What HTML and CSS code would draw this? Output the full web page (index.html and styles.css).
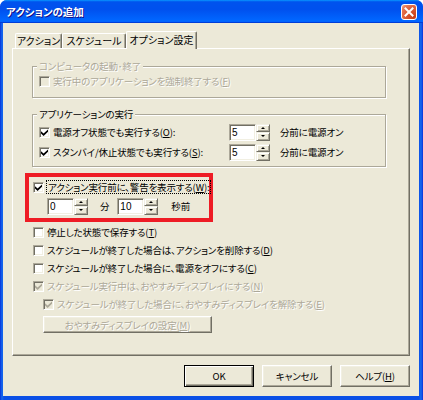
FILE: index.html
```html
<!DOCTYPE html>
<html lang="ja">
<head>
<meta charset="utf-8">
<title>アクションの追加</title>
<link rel="stylesheet" href="styles.css">
</head>
<body>
<div class="window">
  <div class="titlebar">
    <span class="title">アクションの追加</span>
    <span class="close"><svg width="10" height="10" viewBox="0 0 10 10"><path d="M1.5 1.5l7 7M8.5 1.5l-7 7" stroke="#fff" stroke-width="2" stroke-linecap="square"/></svg></span>
  </div>
  <div class="client">
    <div class="tabs">
      <div class="tab t1">アクション</div>
      <div class="tab t2">スケジュール</div>
      <div class="tab t3 active">オプション設定</div>
    </div>
    <div class="panel">
      <fieldset class="group g1 disabled">
        <legend>コンピュータの起動･終了</legend>
        <div class="row r16"><span class="cb"></span><span class="lbl">実行中のアプリケーションを強制終了する(<u>F</u>)</span></div>
      </fieldset>

      <fieldset class="group g2">
        <legend>アプリケーションの実行</legend>
        <div class="row spinrow">
          <div class="check wide"><span class="cb"><svg viewBox="0 0 7 7" width="7" height="7"><path d="M0 2.2 L2.6 4.6 L7 0.4 V2.8 L2.6 7 L0 4.6 Z"/></svg></span><span class="lbl">電源オフ状態でも実行する(<u>O</u>):</span></div>
          <div class="spin"><span class="edit">5</span><span class="arrows"><span class="up"></span><span class="dn"></span></span></div>
          <span class="after">分前に電源オン</span>
        </div>
        <div class="row spinrow">
          <div class="check wide"><span class="cb"><svg viewBox="0 0 7 7" width="7" height="7"><path d="M0 2.2 L2.6 4.6 L7 0.4 V2.8 L2.6 7 L0 4.6 Z"/></svg></span><span class="lbl">スタンバイ/休止状態でも実行する(<u>S</u>):</span></div>
          <div class="spin"><span class="edit">5</span><span class="arrows"><span class="up"></span><span class="dn"></span></span></div>
          <span class="after">分前に電源オン</span>
        </div>
      </fieldset>

      <div class="highlight">
        <div class="row r18"><span class="cb"><svg viewBox="0 0 7 7" width="7" height="7"><path d="M0 2.2 L2.6 4.6 L7 0.4 V2.8 L2.6 7 L0 4.6 Z"/></svg></span><span class="lbl focus">アクション実行前に、警告を表示する(<u>W</u>):</span></div>
        <div class="row timer">
          <div class="spin"><span class="edit">0</span><span class="arrows"><span class="up"></span><span class="dn"></span></span></div>
          <span class="unit u1">分</span>
          <div class="spin"><span class="edit">10</span><span class="arrows"><span class="up"></span><span class="dn"></span></span></div>
          <span class="unit u2">秒前</span>
        </div>
      </div>

      <div class="row r18 opt"><span class="cb"></span><span class="lbl">停止した状態で保存する(<u>T</u>)</span></div>
      <div class="row r18 opt"><span class="cb"></span><span class="lbl">スケジュールが終了した場合は、アクションを削除する(<u>D</u>)</span></div>
      <div class="row r18 opt"><span class="cb"></span><span class="lbl">スケジュールが終了した場合に、電源をオフにする(<u>C</u>)</span></div>
      <div class="row r18 opt disabled"><span class="cb"><svg viewBox="0 0 7 7" width="7" height="7"><path d="M0 2.2 L2.6 4.6 L7 0.4 V2.8 L2.6 7 L0 4.6 Z"/></svg></span><span class="lbl">スケジュール実行中は、おやすみディスプレイにする(<u>N</u>)</span></div>
      <div class="row r18 opt sub disabled"><span class="cb"><svg viewBox="0 0 7 7" width="7" height="7"><path d="M0 2.2 L2.6 4.6 L7 0.4 V2.8 L2.6 7 L0 4.6 Z"/></svg></span><span class="lbl">スケジュールが終了した場合に、おやすみディスプレイを解除する(<u>E</u>)</span></div>
      <div class="btn wide-btn disabled"><span class="lbl">おやすみディスプレイの設定(<u>M</u>)</span></div>
    </div>
    <div class="buttons">
      <div class="btn default">OK</div>
      <div class="btn">キャンセル</div>
      <div class="btn">ヘルプ(<u>H</u>)</div>
    </div>
  </div>
</div>
</body>
</html>
```

FILE: styles.css
```css
* { box-sizing: border-box; }

html, body { margin: 0; padding: 0; background: #fff; }

body {
  font-family: "Noto Sans CJK JP", "Noto Sans", sans-serif;
  font-size: 9.5px;
  letter-spacing: -0.15px;
  font-feature-settings: "palt";
  color: #000;
}

u { text-decoration: underline; text-underline-offset: 1px; }

.window {
  width: 423px;
  height: 400px;
  display: flex;
  flex-direction: column;
  border-radius: 7px 7px 0 0;
  overflow: hidden;
  background: linear-gradient(90deg, #0831d9 0, #166aee 2px, #0a4fe6 4px, #0a4fe6 calc(100% - 4px), #166aee calc(100% - 2px), #0831d9 100%);
}

.titlebar {
  height: 23px;
  flex: none;
  display: flex;
  align-items: center;
  padding: 0 6px 0 6px;
  background: linear-gradient(180deg, #0997ff 0%, #0053ee 8%, #0050ee 40%, #0066ff 88%, #0066ff 93%, #005bff 95%, #003dd7 96%, #003dd7 100%);
}

.title {
  flex: 1;
  color: #fff;
  font-weight: bold;
  font-size: 10.5px;
  letter-spacing: 0;
  text-shadow: 1px 1px 0 #0f1089;
}

.close {
  width: 16px;
  height: 16px;
  border: 1px solid #fff;
  border-radius: 3px;
  display: flex;
  align-items: center;
  justify-content: center;
  background: radial-gradient(circle at 85% 85%, #c83e17 0%, #db5b34 50%, #e87a57 80%, #f3b39b 100%);
}

.client {
  flex: 1;
  margin: 0 4px 4px 3px;
  background: #ece9d8;
  display: flex;
  flex-direction: column;
}

/* tabs */
.tabs {
  display: flex;
  align-items: flex-end;
  height: 17px;
  margin: 8px 0 0 12px;
}

.tab {
  height: 15px;
  background: #ece9d8;
  border-top: 1px solid #fff;
  border-left: 1px solid #fff;
  border-right: 1px solid #716f64;
  box-shadow: inset -1px 0 0 #aca899;
  border-radius: 2px 2px 0 0;
  display: flex;
  align-items: center;
  justify-content: center;
  padding-bottom: 1px;
  font-size: 10px;
  letter-spacing: 0;
}

.t1 { width: 47px; }
.t2 { width: 64px; }
.t3 { width: 71px; }

.tab.active {
  height: 18px;
  margin-bottom: -1px;
  position: relative;
  z-index: 1;
  padding-bottom: 3px;
}

/* panel */
.panel {
  height: 308px;
  margin: 0 9px 0 9px;
  border: 1px solid;
  border-color: #fff #716f64 #716f64 #fff;
  box-shadow: inset -1px -1px 0 #aca899;
  display: flex;
  flex-direction: column;
  align-items: flex-start;
}

.group {
  margin: 0 0 0 19px;
  width: 354px;
  min-width: 0;
  border: 1px solid #aca899;
  box-shadow: 1px 1px 0 #fff, inset 1px 1px 0 #fff;
  padding: 0 6px 8px 6px;
}

.group legend {
  padding: 0 2px;
  margin-left: -2px;
  line-height: 13px;
  height: 13px;
  background: #ece9d8;
}

.g1 { margin-top: 11px; }
.g2 { margin-top: 10px; padding-top: 1px; padding-bottom: 4px; }

.row {
  display: flex;
  align-items: center;
  gap: 3px;
  white-space: nowrap;
}

.r16 { height: 16px; }
.r18 { height: 18px; }

.spinrow { height: 20px; gap: 0; }

.check {
  display: flex;
  align-items: center;
  gap: 3px;
}

.check.wide { width: 190px; }

.after { margin-left: 10px; }

.disabled .lbl,
.disabled legend {
  color: #aca899;
  text-shadow: 1px 1px 0 #fff;
}

.disabled u { text-decoration-color: #aca899; }

/* checkbox */
.cb {
  width: 11px;
  height: 11px;
  flex: none;
  background: #fff;
  border: 1px solid;
  border-color: #aca899 #fff #fff #aca899;
  box-shadow: inset 1px 1px 0 #716f64, inset -1px -1px 0 #f1efe2;
  display: flex;
  align-items: center;
  justify-content: center;
}

.cb svg { display: block; fill: #000; }

.disabled .cb { background: #ece9d8; }
.disabled .cb svg { fill: #aca899; }

.focus {
  outline: 1px dotted #000;
  outline-offset: 0;
  padding: 0 1px;
  line-height: 12px;
}

/* spin */
.spin { display: flex; flex: none; }

.edit {
  width: 27px;
  height: 17px;
  background: #fff;
  border: 1px solid;
  border-color: #aca899 #fff #fff #aca899;
  box-shadow: inset 1px 1px 0 #716f64, inset -1px -1px 0 #f1efe2;
  padding: 0 0 0 2px;
  line-height: 15px;
  font-family: "Liberation Sans", "Noto Sans", sans-serif;
  font-size: 10px;
  letter-spacing: 0;
}

.arrows {
  width: 14px;
  height: 17px;
  display: flex;
  flex-direction: column;
}

.arrows span {
  flex: 1;
  background: #ece9d8;
  border: 1px solid;
  border-color: #f1efe2 #716f64 #716f64 #f1efe2;
  box-shadow: inset 1px 1px 0 #fff, inset -1px -1px 0 #aca899;
  display: flex;
  align-items: center;
  justify-content: center;
}

.arrows span::before {
  content: "";
  width: 0;
  height: 0;
  border-left: 2px solid transparent;
  border-right: 2px solid transparent;
}

.arrows .up::before { border-bottom: 2px solid #000; }
.arrows .dn::before { border-top: 2px solid #000; }

/* highlighted box */
.highlight {
  margin: 6px 0 0 12px;
  width: 188px;
  height: 49px;
  border: 4px solid #ee1c25;
  padding: 1px 0 0 4px;
}

.timer { height: 20px; gap: 0; padding-left: 14px; }
.u1 { margin: 0 8px 0 12px; }
.u2 { margin-left: 13px; }

.opt { margin-left: 20px; }
.highlight + .opt { margin-top: 1px; }
.opt.sub { margin-left: 30px; }

/* buttons */
.btn {
  width: 70px;
  height: 22px;
  flex: none;
  display: flex;
  align-items: center;
  justify-content: center;
  background: #ece9d8;
  border: 1px solid;
  border-color: #fff #716f64 #716f64 #fff;
  box-shadow: inset -1px -1px 0 #aca899, inset 1px 1px 0 #f1efe2;
  white-space: nowrap;
}

.btn.default {
  border: 1px solid #000;
  box-shadow: inset 1px 1px 0 #fff, inset -1px -1px 0 #716f64, inset -2px -2px 0 #aca899;
}

.wide-btn {
  width: 169px;
  height: 17px;
  margin: 3px 0 0 30px;
}

.buttons {
  display: flex;
  justify-content: flex-end;
  gap: 8px;
  margin: 9px 9px 0 0;
}
```
